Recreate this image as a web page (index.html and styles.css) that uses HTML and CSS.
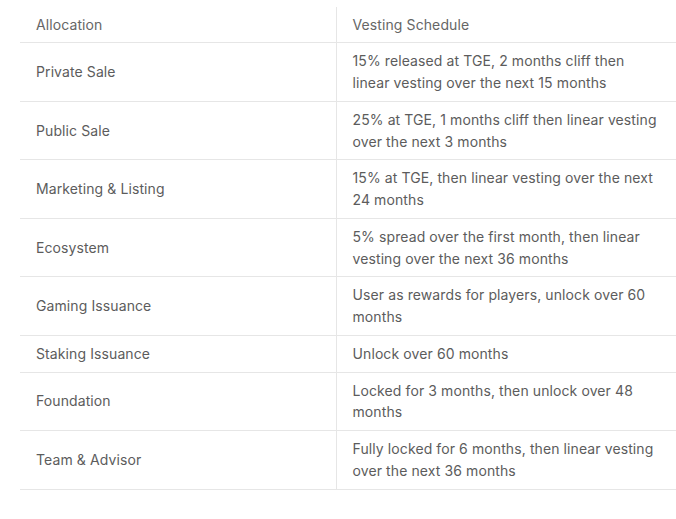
FILE: index.html
```html
<!DOCTYPE html>
<html lang="en">
<head>
<meta charset="utf-8">
<link rel="stylesheet" href="styles.css">
</head>
<body>
<table class="vest">
  <thead>
    <tr><th class="c1">Allocation</th><th class="c2">Vesting Schedule</th></tr>
  </thead>
  <tbody>
    <tr><td class="c1">Private Sale</td><td class="c2">15% released at TGE, 2 months cliff then linear vesting over the next 15 months</td></tr>
    <tr><td class="c1">Public Sale</td><td class="c2">25% at TGE, 1 months cliff then linear vesting over the next 3 months</td></tr>
    <tr><td class="c1">Marketing &amp; Listing</td><td class="c2">15% at TGE, then linear vesting over the next 24 months</td></tr>
    <tr><td class="c1">Ecosystem</td><td class="c2">5% spread over the first month, then linear vesting over the next 36 months</td></tr>
    <tr><td class="c1">Gaming Issuance</td><td class="c2">User as rewards for players, unlock over 60 months</td></tr>
    <tr><td class="c1">Staking Issuance</td><td class="c2">Unlock over 60 months</td></tr>
    <tr><td class="c1">Foundation</td><td class="c2">Locked for 3 months, then unlock over 48 months</td></tr>
    <tr><td class="c1">Team &amp; Advisor</td><td class="c2">Fully locked for 6 months, then linear vesting over the next 36 months</td></tr>
  </tbody>
</table>
</body>
</html>
```
FILE: styles.css
```css
html, body {
  margin: 0;
  padding: 0;
  background: #ffffff;
  overflow: hidden;
}
body {
  padding: 6.5px 0 0 20px;
  font-family: Inter, "Noto Sans", sans-serif;
  font-size: 14px;
  letter-spacing: 0.1px;
  color: #5c5c5c;
}
.vest {
  border-collapse: collapse;
  width: 660px;
  table-layout: fixed;
}
.vest th, .vest td {
  font-weight: 400;
  text-align: left;
  vertical-align: middle;
  line-height: 21.75px;
  padding: 7px 16px;
  border-bottom: 1px solid #e6e6e6;
}
.vest th {
  color: #666666;
}
.vest .c1 {
  width: 316px;
  box-sizing: border-box;
  border-right: 1px solid #e6e6e6;
}
.vest .c2 {
  padding-right: 22px;
}
```
